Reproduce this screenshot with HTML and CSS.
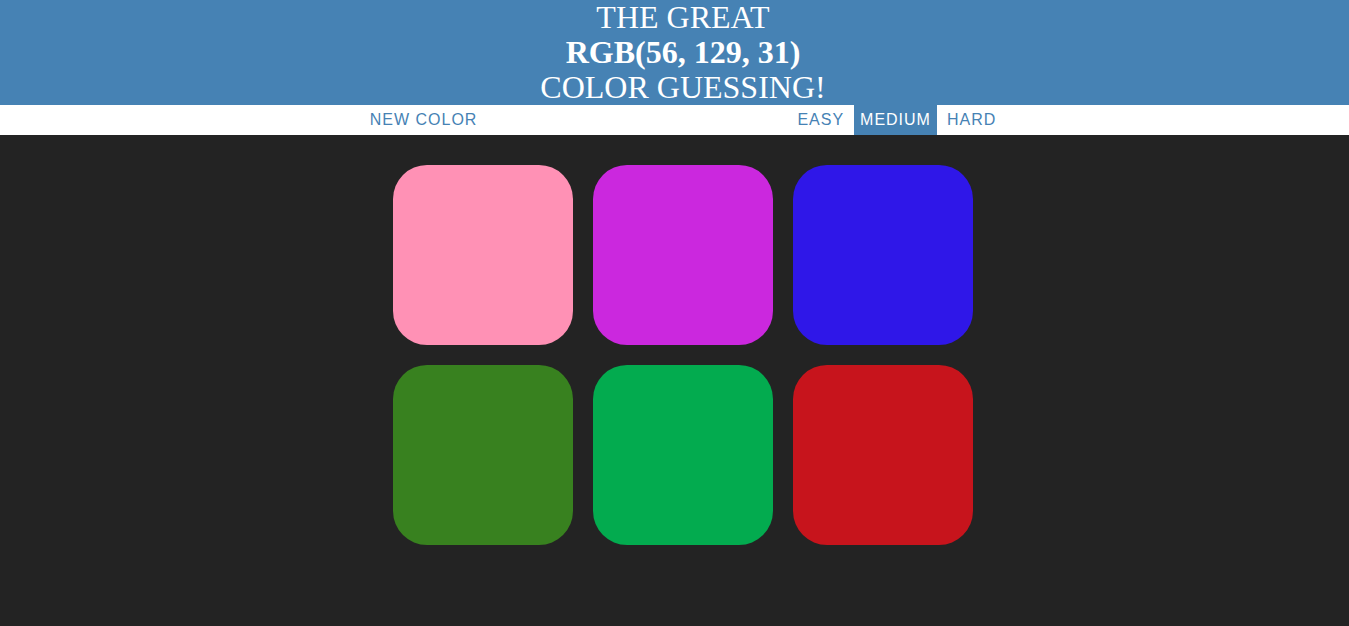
FILE: index.html
```html
<!DOCTYPE html>
<html>
<head>
<meta charset="utf-8">
<title>Color Game</title>
<link rel="stylesheet" href="styles.css">
</head>
<body>
<h1 class="title">
  <span class="title-line">The Great</span>
  <span class="title-line title-rgb">RGB(56, 129, 31)</span>
  <span class="title-line">Color Guessing!</span>
</h1>
<div class="stripe">
  <div class="stripe-inner">
    <button class="btn">New Color</button>
    <span class="message"></span>
    <button class="btn mode">Easy</button>
    <button class="btn mode selected">Medium</button>
    <button class="btn mode">Hard</button>
  </div>
</div>
<div class="board">
  <div class="grid">
    <div class="square sq-pink"></div>
    <div class="square sq-magenta"></div>
    <div class="square sq-blue"></div>
    <div class="square sq-green"></div>
    <div class="square sq-emerald"></div>
    <div class="square sq-red"></div>
  </div>
</div>
</body>
</html>
```

FILE: styles.css
```css
html, body {
  margin: 0;
  padding: 0;
}
body {
  background: #232323;
  font-family: "Liberation Serif", "Times New Roman", serif;
  overflow: hidden;
  height: 626px;
}
.title {
  margin: 0;
  background: #4682b4;
  color: #ffffff;
  text-align: center;
  font-weight: normal;
  font-size: 32px;
  line-height: 35px;
  text-transform: uppercase;
  padding-left: 17px;
}
.title-line {
  display: block;
}
.title-rgb {
  font-weight: bold;
}
.stripe {
  background: #ffffff;
  height: 30px;
  padding-left: 17px;
}
.stripe-inner {
  display: flex;
  justify-content: center;
  gap: 4px;
  height: 100%;
}
.btn {
  border: none;
  background: none;
  margin: 0;
  padding: 0 6px;
  height: 100%;
  font-family: "Liberation Sans", Arial, sans-serif;
  font-size: 16px;
  letter-spacing: 1px;
  text-transform: uppercase;
  color: #4682b4;
  cursor: pointer;
}
.btn.selected {
  background: #4682b4;
  color: #ffffff;
}
.message {
  width: 300px;
}
.board {
  padding-left: 17px;
  padding-top: 30px;
}
.grid {
  display: grid;
  grid-template-columns: repeat(3, 180px);
  gap: 20px;
  justify-content: center;
}
.square {
  width: 180px;
  height: 180px;
  border-radius: 34px;
}
.sq-pink { background: #ff91b5; }
.sq-magenta { background: #cb28de; }
.sq-blue { background: #2f17e8; }
.sq-green { background: #38811f; }
.sq-emerald { background: #03ab4f; }
.sq-red { background: #c7141c; }
```
